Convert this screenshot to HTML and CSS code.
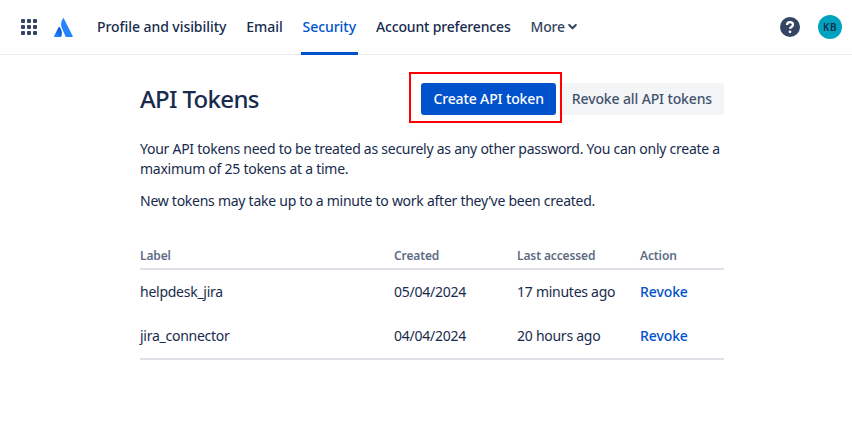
FILE: index.html
```html
<!DOCTYPE html>
<html lang="en">
<head>
<meta charset="utf-8">
<title>API Tokens</title>
<link rel="stylesheet" href="styles.css">
</head>
<body>
<header class="topbar">
  <svg class="apps" width="16" height="16" viewBox="0 0 16 16" aria-hidden="true">
    <g fill="#344563">
      <rect x="0" y="0" width="4" height="4" rx="1"/><rect x="6" y="0" width="4" height="4" rx="1"/><rect x="12" y="0" width="4" height="4" rx="1"/>
      <rect x="0" y="6" width="4" height="4" rx="1"/><rect x="6" y="6" width="4" height="4" rx="1"/><rect x="12" y="6" width="4" height="4" rx="1"/>
      <rect x="0" y="12" width="4" height="4" rx="1"/><rect x="6" y="12" width="4" height="4" rx="1"/><rect x="12" y="12" width="4" height="4" rx="1"/>
    </g>
  </svg>
  <svg class="logo" width="19" height="19" viewBox="0 0 19 19" aria-hidden="true">
    <defs><linearGradient id="lg" x1="0.9" y1="0.1" x2="0.2" y2="0.9"><stop offset="0" stop-color="#0052cc"/><stop offset="1" stop-color="#2684ff"/></linearGradient></defs>
    <path fill="url(#lg)" d="M5.5 9.1c-.3-.3-.7-.3-.9.1L.1 18c-.2.4.1.9.5.9h6.2c.2 0 .4-.1.5-.3 1.300-2.800.5-7-1.800-9.500z"/>
    <path fill="#2684ff" d="M9 .4C6.600 4.100 6.800 8.100 8.300 11.100l3.200 7.500c.1.200.3.300.5.300h6.300c.4 0 .7-.5.500-.9C18.800 18 10.100.6 9.800.4c-.2-.4-.6-.4-.8 0z"/>
  </svg>
  <nav class="nav">
    <a class="nav-item">Profile and visibility</a>
    <a class="nav-item">Email</a>
    <a class="nav-item active">Security</a>
    <a class="nav-item tight">Account preferences</a>
    <a class="nav-item more">More
      <svg width="9" height="6" viewBox="0 0 10 7" aria-hidden="true"><path d="M1.200 1.200 5 5l3.800-3.800" fill="none" stroke="#344563" stroke-width="2.400" stroke-linecap="round" stroke-linejoin="round"/></svg>
    </a>
  </nav>
  <div class="right">
    <svg class="help" width="20" height="20" viewBox="0 0 20 20" aria-hidden="true">
      <circle cx="10" cy="10" r="10" fill="#344563"/>
      <path d="M7 8c0-1.800 1.300-2.800 3-2.800s3 1 3 2.600c0 2.200-3 2.200-3 4" fill="none" stroke="#fff" stroke-width="2.200"/>
      <circle cx="10" cy="14.800" r="1.400" fill="#fff"/>
    </svg>
    <div class="avatar">KB</div>
  </div>
</header>
<main class="content">
  <div class="title-row">
    <h1 class="title">API Tokens</h1>
    <div class="actions">
      <div class="highlight"><button class="btn primary">Create API token</button></div>
      <button class="btn subtle">Revoke all API tokens</button>
    </div>
  </div>
  <p class="para first">Your API tokens need to be treated as securely as any other password. You can only create a maximum of 25 tokens at a time.</p>
  <p class="para">New tokens may take up to a minute to work after they’ve been created.</p>
  <table class="tokens">
    <colgroup><col class="c1"><col class="c2"><col class="c3"><col class="c4"></colgroup>
    <thead><tr><th>Label</th><th>Created</th><th>Last accessed</th><th>Action</th></tr></thead>
    <tbody>
      <tr><td>helpdesk_jira</td><td>05/04/2024</td><td>17 minutes ago</td><td><a class="revoke">Revoke</a></td></tr>
      <tr><td>jira_connector</td><td>04/04/2024</td><td>20 hours ago</td><td><a class="revoke">Revoke</a></td></tr>
    </tbody>
  </table>
</main>
</body>
</html>
```
FILE: styles.css
```css
* { box-sizing: border-box; }
html, body { margin: 0; padding: 0; }
body {
  background: #fff;
  color: #172b4d;
  font-family: "Noto Sans", "Liberation Sans", sans-serif;
  font-size: 14px;
  line-height: 20px;
  letter-spacing: -0.26px;
  height: 435px;
  overflow: hidden;
}
.topbar {
  display: flex;
  align-items: center;
  height: 55px;
  padding: 0 10px 0 21px;
  border-bottom: 1px solid #ebecf0;
}
.apps { flex: none; }
.logo { flex: none; margin-left: 17px; }
.nav { display: flex; align-self: stretch; margin-left: 22px; gap: 16px; }
.nav-item {
  position: relative;
  display: flex;
  align-items: center;
  gap: 3px;
  padding: 0 2px 2px;
  height: 55px;
  font-weight: 500;
  letter-spacing: -0.06px;
  color: #172b4d;
}
.nav-item.tight { letter-spacing: -0.16px; }
.nav-item.active { color: #0052cc; }
.nav-item.active::after {
  content: "";
  position: absolute;
  left: 0; right: 0; bottom: 0;
  height: 3px;
  background: #0052cc;
}
.nav-item.more { color: #344563; letter-spacing: -0.2px; }
.right { margin-left: auto; display: flex; align-items: center; gap: 18px; }
.help { flex: none; }
.avatar {
  width: 24px; height: 24px; border-radius: 50%;
  background: #00a3bf; color: #172b4d;
  font-size: 10px; font-weight: 600; line-height: 24px;
  text-align: center; letter-spacing: .4px;
}
.content { width: 584px; margin: 0 0 0 140px; }
.title-row { display: flex; justify-content: space-between; align-items: center; margin-top: 28px; }
.title { margin: 0; font-size: 24px; line-height: 32px; font-weight: 500; letter-spacing: -0.66px; color: #172b4d; }
.actions { display: flex; align-items: center; gap: 4px; }
.highlight { position: relative; }
.highlight::after {
  content: "";
  position: absolute;
  inset: -11px -6px -8px -12px;
  border: 2px solid #f00;
  pointer-events: none;
}
.btn {
  display: block; border: 0; height: 32px; padding: 0 12px; border-radius: 3px;
  font: 500 14px/32px "Noto Sans", "Liberation Sans", sans-serif;
  letter-spacing: -0.13px;
}
.primary { background: #0052cc; color: #fff; }
.subtle { background: #f4f5f7; color: #42526e; }
.para { margin: 12px 0 0; width: 584px; }
.para.first { margin-top: 24px; }
.tokens { width: 584px; table-layout: fixed; border-collapse: separate; border-spacing: 0; margin-top: 35px; border-bottom: 2px solid #dfe1e6; }
.c1 { width: 254px; } .c2 { width: 123px; } .c3 { width: 123px; } .c4 { width: 84px; }
th {
  text-align: left; vertical-align: top; padding: 2px 0 0; height: 24px; font-size: 12px; line-height: 16px;
  font-weight: 600; letter-spacing: -0.12px; color: #5e6c84; border-bottom: 2px solid #dfe1e6;
}
td { padding: 0; height: 44px; }
.revoke { color: #0052cc; font-weight: 500; letter-spacing: -0.1px; }
```
